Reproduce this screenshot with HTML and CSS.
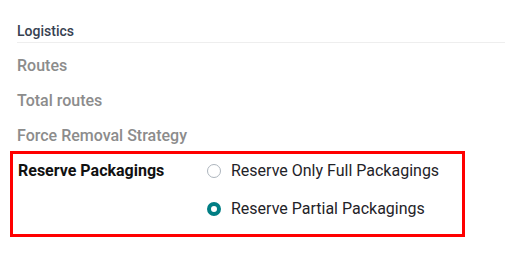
FILE: index.html
```html
<!DOCTYPE html>
<html lang="en">
<head>
    <meta charset="UTF-8">
    <meta name="viewport" content="width=device-width, initial-scale=1.0">
    <title>Logistics</title>
    <link rel="stylesheet" href="styles.css">
</head>
<body>
    <div class="container">
        <!-- Section title -->
        <div class="section-title">Logistics</div>

        <div class="field muted">Routes</div>
        <div class="field muted">Total routes</div>
        <div class="field muted">Force Removal Strategy</div>

        <!-- Highlighted setting -->
        <div class="highlight">
            <div class="field-label">Reserve Packagings</div>
            <div class="options">
                <label class="option">
                    <span class="radio"></span>
                    Reserve Only Full Packagings
                </label>
                <label class="option">
                    <span class="radio checked"></span>
                    Reserve Partial Packagings
                </label>
            </div>
        </div>
    </div>
</body>
</html>
```

FILE: styles.css
```css
/* General styles */
body {
    font-family: Roboto, "Noto Sans", sans-serif;
    margin: 0;
    padding: 0;
    background-color: #fff;
    color: #212529;
}

.container {
    padding: 20px 0 0 17px;
}

.section-title {
    font-size: 14px;
    font-weight: 500;
    color: #374151;
    line-height: 22px;
    border-bottom: 1px solid #eeeeee;
}

.field {
    font-size: 16px;
    font-weight: 500;
    line-height: 22px;
    margin-top: 12px;
}

.field + .field {
    margin-top: 13px;
}

.muted {
    color: #8c8c8c;
}

/* Red highlight box */
.highlight {
    display: flex;
    width: 444px;
    margin: 4px 0 0 -7px;
    padding: 6px 0 14px 5px;
    border: 3px solid #ff0000;
}

.field-label {
    width: 189px;
    font-size: 16px;
    font-weight: 700;
    color: #111;
    line-height: 22px;
}

.options {
    display: flex;
    flex-direction: column;
    gap: 16px;
}

.option {
    display: flex;
    align-items: center;
    gap: 10px;
    font-size: 16px;
    line-height: 22px;
    color: #1f2328;
}

.radio {
    width: 14px;
    height: 14px;
    box-sizing: border-box;
    border: 1px solid #adb5bd;
    border-radius: 50%;
    background: #fff;
}

.radio.checked {
    border: 4px solid #017e84;
    background: #fff;
}
```
